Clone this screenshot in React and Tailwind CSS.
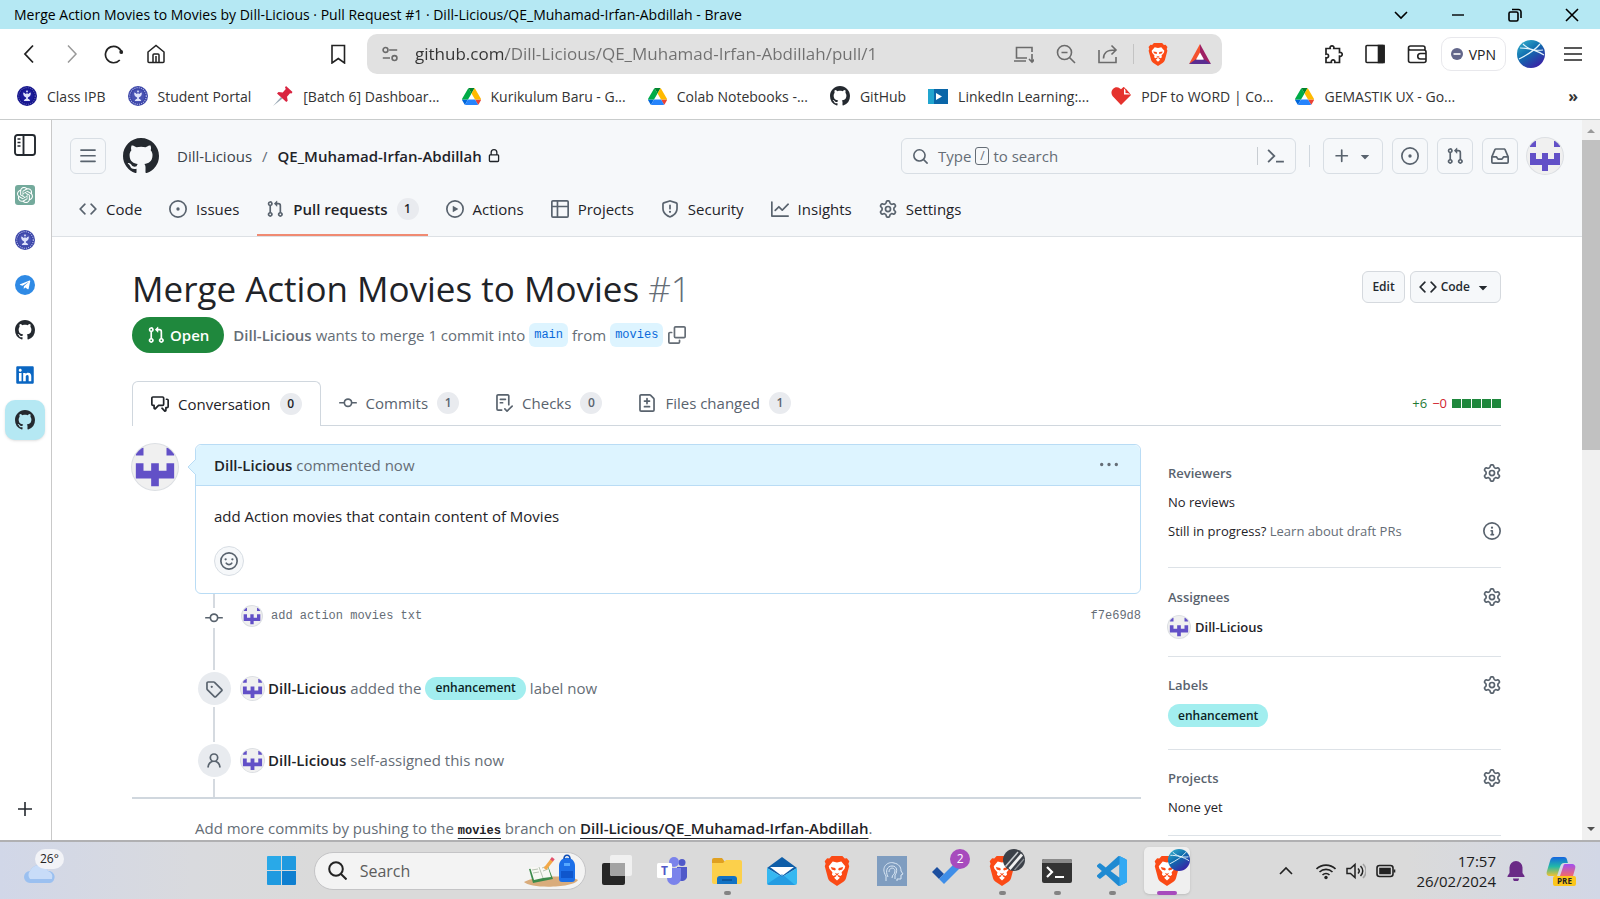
import { FaLinkedin, FaTelegramPlane } from "react-icons/fa";
import { SiOpenai } from "react-icons/si";

const SANS = "font-['Open_Sans','Noto_Sans',sans-serif]";
const MONO = "font-['Liberation_Mono',monospace]";

const paths = {
  code: "m11.28 3.22 4.25 4.25a.75.75 0 0 1 0 1.06l-4.25 4.25a.749.749 0 0 1-1.275-.326.749.749 0 0 1 .215-.734L13.94 8l-3.72-3.72a.749.749 0 0 1 .326-1.275.749.749 0 0 1 .734.215Zm-6.56 0a.751.751 0 0 1 1.042.018.751.751 0 0 1 .018 1.042L2.06 8l3.72 3.72a.749.749 0 0 1-.326 1.275.749.749 0 0 1-.734-.215L.47 8.53a.75.75 0 0 1 0-1.06Z",
  issue: "M8 9.5a1.5 1.5 0 1 0 0-3 1.5 1.5 0 0 0 0 3ZM8 0a8 8 0 1 1 0 16A8 8 0 0 1 8 0ZM1.5 8a6.5 6.5 0 1 0 13 0 6.5 6.5 0 0 0-13 0Z",
  pull: "M1.5 3.25a2.25 2.25 0 1 1 3 2.122v5.256a2.251 2.251 0 1 1-1.5 0V5.372A2.25 2.25 0 0 1 1.5 3.25Zm5.677-.177L9.573.677A.25.25 0 0 1 10 .854V2.5h1A2.5 2.5 0 0 1 13.5 5v5.628a2.251 2.251 0 1 1-1.5 0V5a1 1 0 0 0-1-1h-1v1.646a.25.25 0 0 1-.427.177L7.177 3.427a.25.25 0 0 1 0-.354ZM3.75 2.5a.75.75 0 1 0 0 1.5.75.75 0 0 0 0-1.5Zm0 9.5a.75.75 0 1 0 0 1.5.75.75 0 0 0 0-1.5Zm8.25.75a.75.75 0 1 0 1.5 0 .75.75 0 0 0-1.5 0Z",
  play: "M8 0a8 8 0 1 1 0 16A8 8 0 0 1 8 0ZM1.5 8a6.5 6.5 0 1 0 13 0 6.5 6.5 0 0 0-13 0Zm4.879-2.773 4.264 2.559a.25.25 0 0 1 0 .428l-4.264 2.559A.25.25 0 0 1 6 10.559V5.442a.25.25 0 0 1 .379-.215Z",
  table: "M0 1.75C0 .784.784 0 1.75 0h12.5C15.216 0 16 .784 16 1.75v12.5A1.75 1.75 0 0 1 14.25 16H1.75A1.75 1.75 0 0 1 0 14.25ZM6.5 6.5v8h7.75a.25.25 0 0 0 .25-.25V6.5Zm8-1.5V1.75a.25.25 0 0 0-.25-.25H6.5V5Zm-13 1.5v7.75c0 .138.112.25.25.25H5v-8ZM5 5V1.5H1.75a.25.25 0 0 0-.25.25V5Z",
  shield: "M7.467.133a1.748 1.748 0 0 1 1.066 0l5.25 1.68A1.75 1.75 0 0 1 15 3.48V7c0 1.566-.32 3.182-1.303 4.682-.983 1.498-2.585 2.813-5.032 3.855a1.697 1.697 0 0 1-1.33 0c-2.447-1.042-4.049-2.357-5.032-3.855C1.32 10.182 1 8.566 1 7V3.48a1.75 1.75 0 0 1 1.217-1.667Zm.61 1.429a.25.25 0 0 0-.153 0l-5.25 1.68a.25.25 0 0 0-.174.238V7c0 1.358.275 2.666 1.057 3.86.784 1.194 2.121 2.34 4.366 3.297a.196.196 0 0 0 .154 0c2.245-.956 3.582-2.104 4.366-3.298C13.225 9.666 13.5 8.36 13.5 7V3.48a.251.251 0 0 0-.174-.237l-5.25-1.68ZM8.75 4.75v3a.75.75 0 0 1-1.5 0v-3a.75.75 0 0 1 1.5 0ZM9 10.5a1 1 0 1 1-2 0 1 1 0 0 1 2 0Z",
  graph: "M1.5 1.75V13.5h13.75a.75.75 0 0 1 0 1.5H.75a.75.75 0 0 1-.75-.75V1.75a.75.75 0 0 1 1.5 0Zm14.28 2.53-5.25 5.25a.75.75 0 0 1-1.06 0L7 7.06 4.28 9.78a.751.751 0 0 1-1.042-.018.751.751 0 0 1-.018-1.042l3.25-3.25a.75.75 0 0 1 1.06 0L10 7.94l4.72-4.72a.751.751 0 0 1 1.042.018.751.751 0 0 1 .018 1.042Z",
  gear: "M8 0a8.2 8.2 0 0 1 .701.031C9.444.095 9.99.645 10.16 1.29l.288 1.107c.018.066.079.158.212.224.231.114.454.243.668.386.123.082.233.09.299.071l1.103-.303c.644-.176 1.392.021 1.82.63.27.385.506.792.704 1.218.315.675.111 1.422-.364 1.891l-.814.806c-.049.048-.098.147-.088.294.016.257.016.515 0 .772-.01.147.038.246.088.294l.814.806c.475.469.679 1.216.364 1.891a7.977 7.977 0 0 1-.704 1.217c-.428.61-1.176.807-1.82.63l-1.102-.302c-.067-.019-.177-.011-.3.071a5.909 5.909 0 0 1-.668.386c-.133.066-.194.158-.211.224l-.29 1.106c-.168.646-.715 1.196-1.458 1.26a8.006 8.006 0 0 1-1.402 0c-.743-.064-1.289-.614-1.458-1.26l-.289-1.106c-.018-.066-.079-.158-.212-.224a5.738 5.738 0 0 1-.668-.386c-.123-.082-.233-.09-.299-.071l-1.103.303c-.644.176-1.392-.021-1.82-.63a8.12 8.12 0 0 1-.704-1.218c-.315-.675-.111-1.422.363-1.891l.815-.806c.05-.048.098-.147.088-.294a6.214 6.214 0 0 1 0-.772c.01-.147-.038-.246-.088-.294l-.815-.806C.635 6.045.431 5.298.746 4.623a7.92 7.92 0 0 1 .704-1.217c.428-.61 1.176-.807 1.82-.63l1.102.302c.067.019.177.011.3-.071.214-.143.437-.272.668-.386.133-.066.194-.158.211-.224l.29-1.106C6.009.645 6.556.095 7.299.03 7.53.01 7.764 0 8 0Zm-.571 1.525c-.036.003-.108.036-.137.146l-.289 1.105c-.147.561-.549.967-.998 1.189-.173.086-.34.183-.5.29-.417.278-.97.423-1.529.27l-1.103-.303c-.109-.03-.175.016-.195.045-.22.312-.412.644-.573.99-.014.031-.021.11.059.19l.815.806c.411.406.562.957.53 1.456a4.709 4.709 0 0 0 0 .582c.032.499-.119 1.05-.53 1.456l-.815.806c-.081.08-.073.159-.059.19.162.346.353.677.573.989.02.03.085.076.195.046l1.102-.303c.56-.153 1.113-.008 1.53.27.161.107.328.204.501.29.447.222.85.629.997 1.189l.289 1.105c.029.109.101.143.137.146a6.6 6.6 0 0 0 1.142 0c.036-.003.108-.036.137-.146l.289-1.105c.147-.561.549-.967.998-1.189.173-.086.34-.183.5-.29.417-.278.97-.423 1.529-.27l1.103.303c.109.029.175-.016.195-.045.22-.313.411-.644.573-.99.014-.031.021-.11-.059-.19l-.815-.806c-.411-.406-.562-.957-.53-1.456a4.709 4.709 0 0 0 0-.582c-.032-.499.119-1.05.53-1.456l.815-.806c.081-.08.073-.159.059-.19a6.464 6.464 0 0 0-.573-.989c-.02-.03-.085-.076-.195-.046l-1.102.303c-.56.153-1.113.008-1.53-.27a4.44 4.44 0 0 0-.501-.29c-.447-.222-.85-.629-.997-1.189l-.289-1.105c-.029-.11-.101-.143-.137-.146a6.6 6.6 0 0 0-1.142 0ZM11 8a3 3 0 1 1-6 0 3 3 0 0 1 6 0ZM9.5 8a1.5 1.5 0 1 0-3.001.001A1.5 1.5 0 0 0 9.5 8Z",
  github: "M8 0c4.42 0 8 3.58 8 8a8.013 8.013 0 0 1-5.45 7.59c-.4.08-.55-.17-.55-.38 0-.27.01-1.13.01-2.2 0-.75-.25-1.23-.54-1.48 1.78-.2 3.65-.88 3.65-3.95 0-.88-.31-1.59-.82-2.15.08-.2.36-1.02-.08-2.12 0 0-.67-.22-2.2.82-.64-.18-1.32-.27-2-.27-.68 0-1.36.09-2 .27-1.53-1.03-2.2-.82-2.2-.82-.44 1.1-.16 1.92-.08 2.12-.51.56-.82 1.28-.82 2.15 0 3.06 1.86 3.75 3.64 3.95-.23.2-.44.55-.51 1.07-.46.21-1.61.55-2.33-.66-.15-.24-.6-.83-1.23-.82-.67.01-.27.38.01.53.34.19.73.9.82 1.13.16.45.68 1.31 2.69.94 0 .67.01 1.3.01 1.49 0 .21-.15.45-.55.38A7.995 7.995 0 0 1 0 8c0-4.42 3.58-8 8-8Z",
  bars: "M1 2.75A.75.75 0 0 1 1.75 2h12.5a.75.75 0 0 1 0 1.5H1.75A.75.75 0 0 1 1 2.75Zm0 5A.75.75 0 0 1 1.75 7h12.5a.75.75 0 0 1 0 1.5H1.75A.75.75 0 0 1 1 7.75ZM1.75 12h12.5a.75.75 0 0 1 0 1.5H1.75a.75.75 0 0 1 0-1.5Z",
  lock: "M4 4a4 4 0 0 1 8 0v2h.25c.966 0 1.75.784 1.75 1.75v5.5A1.75 1.75 0 0 1 12.25 15h-8.5A1.75 1.75 0 0 1 2 13.25v-5.5C2 6.784 2.784 6 3.75 6H4Zm8.25 3.5h-8.5a.25.25 0 0 0-.25.25v5.5c0 .138.112.25.25.25h8.5a.25.25 0 0 0 .25-.25v-5.5a.25.25 0 0 0-.25-.25ZM10.5 6V4a2.5 2.5 0 1 0-5 0v2Z",
  inbox: "M2.8 2.06A1.75 1.75 0 0 1 4.41 1h7.18c.7 0 1.333.417 1.61 1.06l2.74 6.395c.04.093.06.194.06.295v4.5A1.75 1.75 0 0 1 14.25 15H1.75A1.75 1.75 0 0 1 0 13.25v-4.5c0-.101.02-.202.06-.295Zm1.61.44a.25.25 0 0 0-.23.152L1.887 8H4.75a.75.75 0 0 1 .6.3L6.625 10h2.75l1.275-1.7a.75.75 0 0 1 .6-.3h2.863L11.82 2.652a.25.25 0 0 0-.23-.152Zm10.09 7h-2.875l-1.275 1.7a.75.75 0 0 1-.6.3h-3.5a.75.75 0 0 1-.6-.3L4.375 9.5H1.5v3.75c0 .138.112.25.25.25h12.5a.25.25 0 0 0 .25-.25Z",
  copy: "M0 6.75C0 5.784.784 5 1.75 5h1.5a.75.75 0 0 1 0 1.5h-1.5a.25.25 0 0 0-.25.25v7.5c0 .138.112.25.25.25h7.5a.25.25 0 0 0 .25-.25v-1.5a.75.75 0 0 1 1.5 0v1.5A1.75 1.75 0 0 1 9.25 16h-7.5A1.75 1.75 0 0 1 0 14.25ZM5 1.75C5 .784 5.784 0 6.75 0h7.5C15.216 0 16 .784 16 1.75v7.5A1.75 1.75 0 0 1 14.25 11h-7.5A1.75 1.75 0 0 1 5 9.25Zm1.75-.25a.25.25 0 0 0-.25.25v7.5c0 .138.112.25.25.25h7.5a.25.25 0 0 0 .25-.25v-7.5a.25.25 0 0 0-.25-.25Z",
  discussion: "M1.75 1h8.5c.966 0 1.75.784 1.75 1.75v5.5A1.75 1.75 0 0 1 10.25 10H7.061l-2.574 2.573A1.458 1.458 0 0 1 2 11.543V10h-.25A1.75 1.75 0 0 1 0 8.25v-5.5C0 1.784.784 1 1.75 1ZM1.5 2.75v5.5c0 .138.112.25.25.25h1a.75.75 0 0 1 .75.75v2.19l2.72-2.72a.749.749 0 0 1 .53-.22h3.5a.25.25 0 0 0 .25-.25v-5.5a.25.25 0 0 0-.25-.25h-8.5a.25.25 0 0 0-.25.25Zm13 2a.25.25 0 0 0-.25-.25h-.5a.75.75 0 0 1 0-1.5h.5c.966 0 1.75.784 1.75 1.75v5.5A1.75 1.75 0 0 1 14.25 12H14v1.543a1.458 1.458 0 0 1-2.487 1.03L9.22 12.28a.749.749 0 0 1 .326-1.275.749.749 0 0 1 .734.215l2.22 2.22v-2.19a.75.75 0 0 1 .75-.75h1a.25.25 0 0 0 .25-.25Z",
  commit: "M11.93 8.5a4.002 4.002 0 0 1-7.86 0H.75a.75.75 0 0 1 0-1.5h3.32a4.002 4.002 0 0 1 7.86 0h3.32a.75.75 0 0 1 0 1.5Zm-1.43-.75a2.5 2.5 0 1 0-5 0 2.5 2.5 0 0 0 5 0Z",
  checklist: "M2.5 1.75v11.5c0 .138.112.25.25.25h3.17a.75.75 0 0 1 0 1.5H2.75A1.75 1.75 0 0 1 1 13.25V1.75C1 .784 1.784 0 2.75 0h8.5C12.216 0 13 .784 13 1.75v7.736a.75.75 0 0 1-1.5 0V1.75a.25.25 0 0 0-.25-.25h-8.5a.25.25 0 0 0-.25.25Zm13.274 9.537v-.001l-4.557 4.45a.75.75 0 0 1-1.055-.008l-1.943-1.95a.75.75 0 0 1 1.062-1.058l1.419 1.425 4.026-3.932a.75.75 0 1 1 1.048 1.074ZM4.75 4h4.5a.75.75 0 0 1 0 1.5h-4.5a.75.75 0 0 1 0-1.5ZM4 7.75A.75.75 0 0 1 4.75 7h2a.75.75 0 0 1 0 1.5h-2A.75.75 0 0 1 4 7.75Z",
  filediff: "M1 1.75C1 .784 1.784 0 2.75 0h7.586c.464 0 .909.184 1.237.513l2.914 2.914c.329.328.513.773.513 1.237v9.586A1.75 1.75 0 0 1 13.25 16H2.75A1.75 1.75 0 0 1 1 14.25Zm1.75-.25a.25.25 0 0 0-.25.25v12.5c0 .138.112.25.25.25h10.5a.25.25 0 0 0 .25-.25V4.664a.25.25 0 0 0-.073-.177l-2.914-2.914a.25.25 0 0 0-.177-.073ZM8 3.25a.75.75 0 0 1 .75.75v1.5h1.5a.75.75 0 0 1 0 1.5h-1.5v1.5a.75.75 0 0 1-1.5 0V7h-1.5a.75.75 0 0 1 0-1.5h1.5V4A.75.75 0 0 1 8 3.25Zm-3 8a.75.75 0 0 1 .75-.75h4.5a.75.75 0 0 1 0 1.5h-4.5a.75.75 0 0 1-.75-.75Z",
  kebab: "M8 9a1.5 1.5 0 1 0 0-3 1.5 1.5 0 0 0 0 3ZM1.5 9a1.5 1.5 0 1 0 0-3 1.5 1.5 0 0 0 0 3Zm13 0a1.5 1.5 0 1 0 0-3 1.5 1.5 0 0 0 0 3Z",
  tag: "M1 7.775V2.75C1 1.784 1.784 1 2.75 1h5.025c.464 0 .91.184 1.238.513l6.25 6.25a1.75 1.75 0 0 1 0 2.474l-5.026 5.026a1.75 1.75 0 0 1-2.474 0l-6.25-6.25A1.752 1.752 0 0 1 1 7.775Zm1.5 0c0 .066.026.13.073.177l6.25 6.25a.25.25 0 0 0 .354 0l5.025-5.025a.25.25 0 0 0 0-.354l-6.25-6.25a.25.25 0 0 0-.177-.073H2.75a.25.25 0 0 0-.25.25ZM6 5a1 1 0 1 1 0 2 1 1 0 0 1 0-2Z",
  person: "M10.561 8.073a6.005 6.005 0 0 1 3.432 5.142.75.75 0 1 1-1.498.07 4.5 4.5 0 0 0-8.99 0 .75.75 0 0 1-1.498-.07 6.004 6.004 0 0 1 3.431-5.142 3.999 3.999 0 1 1 5.123 0ZM10.5 5a2.5 2.5 0 1 0-5 0 2.5 2.5 0 0 0 5 0Z",
  info: "M0 8a8 8 0 1 1 16 0A8 8 0 0 1 0 8Zm8-6.5a6.5 6.5 0 1 0 0 13 6.5 6.5 0 0 0 0-13ZM6.5 7.75A.75.75 0 0 1 7.25 7h1a.75.75 0 0 1 .75.75v2.75h.25a.75.75 0 0 1 0 1.5h-2a.75.75 0 0 1 0-1.5h.25v-2h-.25a.75.75 0 0 1-.75-.75ZM8 6a1 1 0 1 1 0-2 1 1 0 0 1 0 2Z",
  search: "M10.68 11.74a6 6 0 0 1-7.922-8.982 6 6 0 0 1 8.982 7.922l3.04 3.04a.749.749 0 0 1-.326 1.275.749.749 0 0 1-.734-.215ZM11.5 7a4.499 4.499 0 1 0-8.997 0A4.499 4.499 0 0 0 11.5 7Z",
  plus: "M7.75 2a.75.75 0 0 1 .75.75V7h4.25a.75.75 0 0 1 0 1.5H8.5v4.25a.75.75 0 0 1-1.5 0V8.5H2.75a.75.75 0 0 1 0-1.5H7V2.75A.75.75 0 0 1 7.75 2Z",
  caret: "m4.427 7.427 3.396 3.396a.25.25 0 0 0 .354 0l3.396-3.396A.25.25 0 0 0 11.396 7H4.604a.25.25 0 0 0-.177.427Z",
};

function Oct({ name, className = "size-[18px]" }) {
  return (
    <svg viewBox="0 0 16 16" fill="currentColor" aria-hidden="true" className={`shrink-0 ${className}`}>
      <path d={paths[name]} />
    </svg>
  );
}

function Line({ children, className = "size-5", box = "0 0 20 20", w = 1.6 }) {
  return (
    <svg viewBox={box} fill="none" stroke="currentColor" strokeWidth={w} aria-hidden="true" className={`shrink-0 ${className}`}>
      {children}
    </svg>
  );
}

function Avatar({ className }) {
  return (
    <svg viewBox="0 0 6 6" aria-hidden="true" className={`shrink-0 rounded-full bg-[#f0f0f0] ring-1 ring-[#dcdfe3] ${className}`}>
      <path fill="#6250c7" d="M.5 .5h1v1h-1zM4.5 .5h1v1h-1zM.5 2.5h1v1h1v-1h1v1h1v-1h1v2h-2v1h-1v-1h-2z" />
    </svg>
  );
}

function Brave({ className }) {
  return (
    <svg viewBox="0 0 24 28" aria-hidden="true" className={`shrink-0 ${className}`}>
      <path fill="#fb4a16" d="M12 0h5l2.200 2.300 2-.3 2.300 3-.9 2.200.8 2.300-3 11.300c-.4 1.400-1.300 2.500-2.400 3.300L12 28l-6-3.900c-1.100-.8-2-1.900-2.400-3.300L.6 9.500l.8-2.300L.5 5l2.300-3 2 .3L7 0z" />
      <path fill="#fff" d="M8 5.200 12 6l4-.8 3.700 4.300-.6 2.400-2.800 3.300.4 2.200-1.500 1.200-2-.8-.5 1.200 2 1.400L12 22.800l-2.700-2.400 2-1.400-.5-1.200-2 .8-1.500-1.200.4-2.200-2.800-3.300-.6-2.400z" />
      <path fill="#fb4a16" d="m6.300 10.300 4 .8.600 1.400-.8 1-3-1zM17.700 10.300l-4 .8-.6 1.400.8 1 3-1zM10 15.600l2 .9 2-.9-2 3z" />
    </svg>
  );
}

function Drive() {
  return (
    <svg viewBox="0 0 87 78" aria-hidden="true" className="h-[17px] w-[19px] shrink-0">
      <path fill="#0066da" d="m6.600 66.850 3.850 6.650c.8 1.400 1.950 2.500 3.300 3.300L27.500 53H0c0 1.550.4 3.100 1.200 4.500z" />
      <path fill="#00ac47" d="M43.650 25 29.900 1.200c-1.350.8-2.500 1.900-3.300 3.300L1.200 48.500C.4 49.900 0 51.450 0 53h27.500z" />
      <path fill="#ea4335" d="M73.550 76.800c1.350-.8 2.500-1.900 3.300-3.300l1.600-2.750L86.100 57.500c.8-1.400 1.200-2.950 1.200-4.500H59.800l5.850 11.500z" />
      <path fill="#00832d" d="M43.650 25 57.400 1.200C56.050.4 54.500 0 52.900 0H34.400c-1.600 0-3.150.45-4.500 1.200z" />
      <path fill="#2684fc" d="M59.800 53H27.500L13.750 76.800c1.350.8 2.900 1.200 4.500 1.200h50.800c1.600 0 3.150-.45 4.500-1.200z" />
      <path fill="#ffba00" d="m73.400 26.500-12.700-22c-.8-1.400-1.950-2.500-3.300-3.300L43.650 25 59.800 53h27.450c0-1.550-.4-3.100-1.200-4.500z" />
    </svg>
  );
}

function Ipb({ light, className = "size-5" }) {
  return (
    <svg viewBox="0 0 20 20" aria-hidden="true" className={`shrink-0 ${className}`}>
      <circle cx="10" cy="10" r="10" fill={light ? "#3a44a8" : "#14148c"} />
      <circle cx="10" cy="10" r="8.300" fill="none" stroke="#c3c9f0" strokeWidth="1.200" strokeDasharray="1 1.200" opacity={light ? 0.9 : 0.4} />
      <circle cx="10" cy="10" r="6.600" fill={light ? "#4953b3" : "#1c1c9a"} />
      <path d="M10 4 9 5.600l1 1.200 1-1.200zM6.200 6.500c-.3 2.600 1 4.400 2.900 4.900v1.300c-1.200.3-2 1-2.300 2.300h6.400c-.3-1.300-1.100-2-2.300-2.300v-1.300c1.900-.5 3.200-2.300 2.900-4.900-1.100.1-1.900.6-2.300 1.500L10 7.200 8.500 8c-.4-.9-1.200-1.400-2.300-1.500z" fill="#dfe3fb" />
    </svg>
  );
}

function Globe({ className }) {
  return (
    <svg viewBox="0 0 28 28" aria-hidden="true" className={`shrink-0 ${className}`}>
      <defs>
        <linearGradient id="globe" x1="0" y1="0" x2="0.700" y2="1">
          <stop offset="0" stopColor="#3cb9cf" />
          <stop offset="0.500" stopColor="#0f6cae" />
          <stop offset="1" stopColor="#3a22a6" />
        </linearGradient>
      </defs>
      <circle cx="14" cy="14" r="14" fill="url(#globe)" />
      <path d="M3 8c8 0 16 2 24 7M2 19C10 15 18 10 23 4M6 4c5 5 12 7 20 6" fill="none" stroke="#e3f4fb" strokeWidth="1.200" />
    </svg>
  );
}

function TitleBar() {
  const cell = "flex h-full w-[57px] items-center justify-center";
  return (
    <header className="flex h-[29px] shrink-0 items-center justify-between bg-[#b5e8f3] pl-[14px] text-black">
      <span className="truncate text-[14px]">Merge Action Movies to Movies by Dill-Licious · Pull Request #1 · Dill-Licious/QE_Muhamad-Irfan-Abdillah - Brave</span>
      <div className="flex h-full">
        <button aria-label="Search tabs" className={cell}><Line className="size-[14px]" box="0 0 14 14"><path d="m1 4 6 6 6-6" /></Line></button>
        <button aria-label="Minimize" className={cell}><Line className="size-[14px]" box="0 0 14 14" w={1.4}><path d="M1 7h12" /></Line></button>
        <button aria-label="Restore" className={cell}><Line className="size-[14px]" box="0 0 14 14"><rect x="1" y="4" width="9" height="9" rx="1.500" /><path d="M4 1.500h6.500a2.500 2.500 0 0 1 2.500 2.500V10" /></Line></button>
        <button aria-label="Close" className={cell}><Line className="size-[14px]" box="0 0 14 14"><path d="m1 1 12 12M13 1 1 13" /></Line></button>
      </div>
    </header>
  );
}

function Toolbar() {
  return (
    <div className="flex h-[50px] shrink-0 items-center pl-[19px] pr-[18px] text-[#222]">
      <div className="flex w-[348px] items-center">
        <button aria-label="Back" className="mr-[23px]"><Line w={1.8}><path d="M14 1.500 6 10l8 8.500" /></Line></button>
        <button aria-label="Forward" className="mr-[22px] text-[#999]"><Line w={1.5}><path d="m6 1.500 8 8.500-8 8.500" /></Line></button>
        <button aria-label="Reload" className="mr-[22px]"><Line w={1.7}><path d="M15.800 16a8.200 8.200 0 1 1 2-6.500" /><circle cx="17.200" cy="8" r="1.900" fill="currentColor" stroke="none" /></Line></button>
        <button aria-label="Home"><Line w={1.5}><path d="M2 8v9.500a1 1 0 0 0 1 1h14a1 1 0 0 0 1-1V8l-8-6.500zM7 18.500V11a1 1 0 0 1 1-1h4a1 1 0 0 1 1 1v7.500M10 12v6" /></Line></button>
        <button aria-label="Bookmark this page" className="ml-auto mr-[19px]"><Line w={1.6}><path d="M4 1.500h12.500v17.500l-6.200-4.500L4 19z" /></Line></button>
      </div>
      <div className="flex h-10 flex-1 items-center rounded-[10px] bg-[#e1e1e1] pl-[14px] pr-[11px] text-[#6b6b6b]">
        <Line className="mr-[16px] size-[18px]" w={1.8}><circle cx="5" cy="5.500" r="2.700" /><path d="M9 5.500h9M2 14.500h8" /><circle cx="15" cy="14.500" r="2.700" /></Line>
        <input aria-label="Address" readOnly defaultValue="github.com/Dill-Licious/QE_Muhamad-Irfan-Abdillah/pull/1" className="min-w-0 flex-1 bg-[linear-gradient(90deg,#333_91px,#707070_91px)] bg-clip-text text-[17px] text-transparent outline-none" />
        <button aria-label="Install" className="mr-[22px]"><Line><path d="M18 8V3.500H2.500V14H13M0 17h12M18 10v7.500M15 15l3 3 3-3" /></Line></button>
        <button aria-label="Zoom" className="mr-[22px]"><Line><circle cx="8.500" cy="8.500" r="7" /><path d="M5.500 8.500h6M13.500 13.500l5.500 5.500" /></Line></button>
        <button aria-label="Share" className="mr-[15px]"><Line><path d="M1 6v12.500h17V13M5.500 14.500c0-6 3-8.500 11.500-8.500M13.500 1.500 18 6l-4.500 4.500" /></Line></button>
        <span className="mr-[14px] h-5 w-px bg-[#c3c3c3]" />
        <button aria-label="Brave shields" className="mr-[21px]"><Brave className="h-[23px] w-5" /></button>
        <button aria-label="Rewards">
          <svg viewBox="0 0 22 20" aria-hidden="true" className="h-5 w-[22px]"><path fill="#f4512e" d="M11 0 0 20l7.500-3.500L11 10z" /><path fill="#9e1f63" d="m11 0 11 20-7.500-3.500L11 10z" /><path fill="#5b2d91" d="M0 20h22l-6.500-4.500h-9z" /><path fill="#fff" d="m11 8.500 4 7H7z" /></svg>
        </button>
      </div>
      <div className="ml-[101px] flex items-center">
        <button aria-label="Extensions" className="mr-[22px]"><Line w={1.7}><path d="M3 4.500h4.200c-1-3.600 4.600-3.600 3.600 0h5.700v4c3.600-.8 3.600 4.500 0 3.700v6.300h-4.700c.8-3.500-4.200-3.500-3.400 0H3v-4.700c3.400.8 3.400-4.500 0-3.700z" /></Line></button>
        <button aria-label="Side panel" className="mr-[22px]"><Line w={1.6}><rect x="1" y="1.500" width="18" height="17" rx="1" /><path fill="currentColor" d="M13.500 1.500H19v17h-5.500z" /></Line></button>
        <button aria-label="Wallet" className="mr-[14px]"><Line w={1.6}><path d="M18 6.500V4a2 2 0 0 0-2-2H3.500a2 2 0 0 0 0 4H17a2 2 0 0 1 2 2v8.500a2 2 0 0 1-2 2H3.500a2 2 0 0 1-2-2V4M19 9.500h-5.500a2.700 2.700 0 0 0 0 5.500H19" /></Line></button>
        <button className="mr-[11px] flex h-[34px] items-center gap-[6px] rounded-[10px] border border-[#e8e8ec] px-[9px] text-[14px]">
          <svg viewBox="0 0 12 12" aria-hidden="true" className="size-3"><circle cx="6" cy="6" r="6" fill="#62668a" /><path d="M2.500 6h7" stroke="#fff" strokeWidth="1.600" /></svg>
          VPN
        </button>
        <button aria-label="Profile" className="mr-[19px]"><Globe className="size-7" /></button>
        <button aria-label="Menu"><Line className="size-[18px]" box="0 0 18 18" w={1.5}><path d="M0 3h18M0 9h18M0 15h18" /></Line></button>
      </div>
    </div>
  );
}

const bookmarks = [
  ["Class IPB", <Ipb key="i" />],
  ["Student Portal", <Ipb key="i" light />],
  ["[Batch 6] Dashboar...", <svg key="i" viewBox="0 0 20 20" aria-hidden="true" className="size-5"><path d="m0 20 8-9 1.500 1.500z" fill="#9aa9b5" /><path fill="#d9233f" d="m13 0 6.500 6-1 1.500-1.500-.3-3 3.500.7 4-1.400 1.300L4 7.500 5.500 6l4.200.5L12.800 3 12 1.500z" /></svg>],
  ["Kurikulum Baru - G...", <Drive key="i" />],
  ["Colab Notebooks -...", <Drive key="i" />],
  ["GitHub", <Oct key="i" name="github" className="size-5 text-[#24292f]" />],
  ["LinkedIn Learning:...", <svg key="i" viewBox="0 0 20 15" aria-hidden="true" className="h-[15px] w-5"><path fill="#21a5cf" d="M0 0h10v15H0z" /><path fill="#0a66a8" d="M6 0h14v15H6z" /><path fill="#fff" d="m8 4 6 3.500L8 11z" /></svg>],
  ["PDF to WORD | Co...", <svg key="i" viewBox="0 0 20 18" aria-hidden="true" className="h-[18px] w-5"><path fill="#e5322d" d="M10 18 1.500 9C-2 4 4-2.500 9 1.500l1 .8L12.500 0H13l7 8z" /><path fill="#fff" d="M13 1.500v6h6z" /><path fill="#e5322d" d="M14.500 1.500V6l4.500.5z" /></svg>],
  ["GEMASTIK UX - Go...", <Drive key="i" />],
];

function Bookmarks() {
  return (
    <nav aria-label="Bookmarks" className="flex h-[41px] shrink-0 items-center gap-[22px] border-b border-[#c9cccc] pb-[6px] pl-[17px] pr-[22px] text-[14px] text-[#333]">
      {bookmarks.map(([label, icon]) => (
        <a key={label} href="#" className="flex shrink-0 items-center gap-[10px] whitespace-nowrap">{icon}{label}</a>
      ))}
      <button aria-label="More bookmarks" className="ml-auto text-[16px] font-bold leading-5">»</button>
    </nav>
  );
}

function Rail() {
  const cell = "flex size-10 items-center justify-center";
  return (
    <aside className="flex w-[52px] shrink-0 flex-col items-center gap-[5px] border-r border-[#c9c9c9] pb-[11px] pr-px pt-[5px] text-[#24292f]">
      <button aria-label="Toggle sidebar" className={`mb-[5px] ${cell}`}><Line className="size-[22px]" box="0 0 22 22" w={1.9}><rect x="1" y="1" width="20" height="20" rx="2.500" /><path d="M9.500 1v20" /><path strokeWidth="1.700" d="M3.500 5h3M3.500 8.500h3M3.500 12h3" /></Line></button>
      <a href="#" aria-label="ChatGPT" className={cell}><span className="flex size-5 items-center justify-center rounded-[3px] bg-[#74aa9c] text-white"><SiOpenai className="size-4" /></span></a>
      <a href="#" aria-label="IPB" className={cell}><Ipb light /></a>
      <a href="#" aria-label="Telegram" className={cell}><span className="flex size-5 items-center justify-center rounded-full bg-[#2f8ae5] text-white"><FaTelegramPlane className="mr-px size-3" /></span></a>
      <a href="#" aria-label="GitHub" className={cell}><Oct name="github" className="size-5" /></a>
      <a href="#" aria-label="LinkedIn" className={cell}><FaLinkedin className="size-5 text-[#0a66c2]" /></a>
      <a href="#" aria-label="GitHub pull request" className={`rounded-[10px] bg-[#b5e8f3] shadow-sm ${cell}`}><Oct name="github" className="size-5" /></a>
      <button aria-label="Add" className={`mt-auto ${cell}`}><Line className="size-[14px]" box="0 0 14 14"><path d="M7 0v14M0 7h14" /></Line></button>
    </aside>
  );
}

const repoTabs = [
  ["Code", "code"], ["Issues", "issue"], ["Pull requests", "pull", 1], ["Actions", "play"],
  ["Projects", "table"], ["Security", "shield"], ["Insights", "graph"], ["Settings", "gear"],
];

function Counter({ children }) {
  return <span className="flex h-[22px] min-w-[22px] items-center justify-center rounded-full bg-[#e9ebef] text-[12px] font-semibold">{children}</span>;
}

function RepoHeader() {
  const box = "flex h-9 items-center justify-center rounded-md border border-[#d8dee4] text-[#59636e]";
  return (
    <header className="border-b border-[#dde1e5] bg-[#f6f8fa] pl-[18px] pr-[19px] pt-[18px]">
      <div className="flex h-9 items-center">
        <button aria-label="Open navigation" className={`w-9 ${box}`}><Oct name="bars" /></button>
        <a href="#" aria-label="GitHub home" className="ml-[17px] mr-[18px]"><Oct name="github" className="size-9 text-[#24292f]" /></a>
        <nav aria-label="Breadcrumb" className="flex items-center text-[15px] text-[#1f2328]">
          <a href="#" className="text-[#3b4249]">Dill-Licious</a>
          <span className="mx-[10px] text-[#656d76]">/</span>
          <a href="#" className="mr-[5px] font-semibold">QE_Muhamad-Irfan-Abdillah</a>
          <Oct name="lock" className="size-[14px]" />
        </nav>
        <button className={`ml-auto w-[395px] px-[10px] text-[15px] ${box}`}>
          <Oct name="search" className="mr-[9px] size-[17px]" />
          <span className="flex items-center gap-[4px] text-[#656d76]">Type <kbd className={`flex h-[18px] w-[14px] items-center justify-center rounded-[3px] border border-[#656d76] text-[12px] ${SANS}`}>/</kbd> to search</span>
          <span className="ml-auto mr-[9px] h-[18px] w-px bg-[#c8cdd2]" />
          <Line className="size-[18px]" box="0 0 16 16"><path d="m1 2.500 5.500 5.500L1 13.500M8 13h7" /></Line>
        </button>
        <span className="mx-[13px] h-[22px] w-px bg-[#d0d7de]" />
        <button aria-label="Create new" className={`w-[60px] gap-[5px] ${box}`}><Oct name="plus" /><Oct name="caret" /></button>
        <button aria-label="Issues" className={`ml-[9px] w-9 ${box}`}><Oct name="issue" /></button>
        <button aria-label="Pull requests" className={`ml-[9px] w-9 ${box}`}><Oct name="pull" /></button>
        <button aria-label="Notifications" className={`ml-[9px] mr-[9px] w-9 ${box}`}><Oct name="inbox" /></button>
        <button aria-label="Account"><Avatar className="size-9" /></button>
      </div>
      <nav aria-label="Repository" className="mt-[10px] flex gap-[9px] text-[15px] text-[#1f2328]">
        {repoTabs.map(([label, icon, count]) => (
          <a key={label} href="#" className={`flex h-[52px] items-center gap-[9px] border-b-2 px-[9px] ${count ? "border-[#f08a72] font-semibold" : "border-transparent"}`}>
            <span className="text-[#59636e]"><Oct name={icon} /></span>{label}{count && <Counter>{count}</Counter>}
          </a>
        ))}
      </nav>
    </header>
  );
}

function Branch({ children }) {
  return <a href="#" className={`flex h-6 items-center rounded-md bg-[#ddf4ff] px-[5px] text-[12px] text-[#0969da] ${MONO}`}>{children}</a>;
}

function LabelPill() {
  return <a href="#" className="flex h-[23px] items-center rounded-full bg-[#a2eeef] px-[10px] text-[12px] font-semibold text-[#0a2224]">enhancement</a>;
}

const prTabs = [["Commits", "commit", 1], ["Checks", "checklist", 0], ["Files changed", "filediff", 1]];

function PullHeader() {
  const btn = "flex h-8 items-center rounded-md border border-[#d5d9de] bg-[#f6f8fa] text-[12px] font-semibold text-[#24292f]";
  return (
    <>
      <div className="flex items-start justify-between">
        <h1 className="text-[35px] leading-[45px] text-[#1f2328]">Merge Action Movies to Movies <span className="font-light text-[#656d76]">#1</span></h1>
        <div className="mt-[5px] flex gap-[5px]">
          <button className={`px-[9px] ${btn}`}>Edit</button>
          <button className={`gap-[4px] px-[8px] ${btn}`}><Oct name="code" />Code<Oct name="caret" /></button>
        </div>
      </div>
      <div className="mt-[6px] flex items-center text-[15px] text-[#656d76]">
        <span className="mr-[9px] flex h-9 items-center gap-[5px] rounded-full bg-[#1f883d] px-[15px] font-semibold text-white"><Oct name="pull" />Open</span>
        <a href="#" className="mr-[4px] font-semibold">Dill-Licious</a>
        <span className="mr-[4px]">wants to merge 1 commit into</span>
        <Branch>main</Branch>
        <span className="mx-[4px]">from</span>
        <Branch>movies</Branch>
        <button aria-label="Copy branch name" className="ml-[5px]"><Oct name="copy" /></button>
      </div>
      <div className="mt-[28px] flex items-end justify-between border-b border-[#d0d7de] text-[15px]">
        <nav aria-label="Pull request" className="flex text-[#59636e]">
          <a href="#" className="-mb-px flex h-[45px] items-center gap-[9px] rounded-t-md border border-b-0 border-[#d0d7de] bg-white px-[18px] text-[#1f2328]"><Oct name="discussion" />Conversation<Counter>0</Counter></a>
          {prTabs.map(([label, icon, n]) => (
            <a key={label} href="#" className="flex h-11 items-center gap-[9px] px-[18px]"><Oct name={icon} />{label}<Counter>{n}</Counter></a>
          ))}
        </nav>
        <div className="flex items-center gap-[5px] pb-[12px] text-[13px] leading-5">
          <span className="text-[#1f7a34]">+6</span>
          <span className="text-[#d1242f]">−0</span>
          <span className="flex gap-px">
            {[0, 1, 2, 3, 4].map((i) => <span key={i} className="size-[9px] bg-[#1f883d]" />)}
          </span>
        </div>
      </div>
    </>
  );
}

function Rule({ className }) {
  return <span className={`w-[2px] bg-[#d5dae0] ${className}`} />;
}

function Badge({ name }) {
  return <span className="my-[2px] flex size-[33px] shrink-0 items-center justify-center rounded-full bg-[#e8ebef] text-[#59636e]"><Oct name={name} /></span>;
}

function Timeline() {
  const col = "flex w-[38px] shrink-0 flex-col items-center";
  return (
    <div className="min-w-0 flex-1">
      <div className="flex">
        <Avatar className="mr-[17px] size-[46px]" />
        <article className="relative min-w-0 flex-1 rounded-md border border-[#b9dcf5]">
          <svg viewBox="0 0 9 16" aria-hidden="true" className="absolute -left-[9px] top-[14px] h-4 w-[9px]"><path d="M9 0 1 8l8 8" fill="#ddf4ff" stroke="#b9dcf5" /></svg>
          <header className="flex h-[41px] items-center justify-between rounded-t-md border-b border-[#b9dcf5] bg-[#ddf4ff] pl-[18px] pr-[22px] text-[15px] text-[#656d76]">
            <p><a href="#" className="font-semibold text-[#1f2328]">Dill-Licious</a> commented now</p>
            <button aria-label="Comment actions"><Oct name="kebab" /></button>
          </header>
          <div className="px-[18px] pb-[17px] pt-[18px]">
            <p className="text-[15px] leading-6 text-[#1f2328]">add Action movies that contain content of Movies</p>
            <button aria-label="Add reaction" className="mt-[18px] flex size-[30px] items-center justify-center rounded-full border border-[#d8dee4] bg-[#f6f8fa] text-[#59636e]">
              <Line className="size-[18px]" box="0 0 16 16" w={1.5}><circle cx="8" cy="8" r="7.250" /><path d="M5.600 10c1.200 1.600 3.600 1.600 4.800 0" strokeLinecap="round" /><circle cx="5" cy="6.500" r="1" fill="currentColor" stroke="none" /><circle cx="11" cy="6.500" r="1" fill="currentColor" stroke="none" /></Line>
            </button>
          </div>
        </article>
      </div>
      <ol className="ml-[63px] text-[15px] text-[#656d76]">
        <li className="flex h-[76px]">
          <div className={col}><Rule className="h-[14px]" /><Oct name="commit" className="my-[1px] size-[18px] text-[#59636e]" /><Rule className="flex-1" /></div>
          <div className={`mt-[10px] flex h-6 flex-1 items-center pl-[9px] text-[12px] ${MONO}`}>
            <Avatar className="mr-[9px] size-5" />
            <a href="#">add action movies txt</a>
            <a href="#" className="ml-auto">f7e69d8</a>
          </div>
        </li>
        <li className="flex h-[72px]">
          <div className={col}><Badge name="tag" /><Rule className="flex-1" /></div>
          <div className="mt-[6px] flex h-6 items-center pl-[8px]">
            <Avatar className="mr-[4px] size-[23px]" />
            <a href="#" className="font-semibold text-[#1f2328]">Dill-Licious</a>
            <span className="mx-[4px]">added the</span><LabelPill /><span className="ml-[4px]">label now</span>
          </div>
        </li>
        <li className="flex h-[55px]">
          <div className={col}><Badge name="person" /><Rule className="flex-1" /></div>
          <div className="mt-[6px] flex h-6 items-center pl-[8px]">
            <Avatar className="mr-[4px] size-[23px]" />
            <a href="#" className="font-semibold text-[#1f2328]">Dill-Licious</a>
            <span className="ml-[4px]">self-assigned this now</span>
          </div>
        </li>
      </ol>
      <p className="border-t-2 border-[#d0d7de] pl-[63px] pt-[17px] text-[15px] leading-6 text-[#656d76]">
        Add more commits by pushing to the <b className={`text-[12px] text-[#1f2328] underline decoration-1 underline-offset-4 ${MONO}`}>movies</b> branch on <a href="#" className="font-semibold text-[#1f2328] underline decoration-1 underline-offset-4">Dill-Licious/QE_Muhamad-Irfan-Abdillah</a>.
      </p>
    </div>
  );
}

function SideSection({ title, children, className }) {
  return (
    <section className={`border-b border-[#dde2e7] ${className}`}>
      <div className="flex h-5 items-center justify-between font-semibold text-[#59636e]">
        <h2>{title}</h2>
        <button aria-label={`Edit ${title}`}><Oct name="gear" /></button>
      </div>
      {children}
    </section>
  );
}

function Sidebar() {
  return (
    <aside className="ml-[27px] w-[333px] shrink-0 pt-[19px] text-[13px] leading-5 text-[#1f2328]">
      <SideSection title="Reviewers" className="pb-[26px]">
        <p className="mt-[9px]">No reviews</p>
        <div className="mt-[9px] flex items-center justify-between">
          <p>Still in progress? <a href="#" className="text-[#656d76]">Learn about draft PRs</a></p>
          <Oct name="info" className="size-[18px] text-[#59636e]" />
        </div>
      </SideSection>
      <SideSection title="Assignees" className="pb-[17px] pt-[19px]">
        <a href="#" className="mt-[8px] flex h-6 items-center gap-[5px] font-semibold"><Avatar className="size-[22px]" />Dill-Licious</a>
      </SideSection>
      <SideSection title="Labels" className="pb-[22px] pt-[18px]">
        <div className="mt-[9px] flex"><LabelPill /></div>
      </SideSection>
      <SideSection title="Projects" className="pb-[18px] pt-[18px]">
        <p className="mt-[9px]">None yet</p>
      </SideSection>
    </aside>
  );
}

function Scrollbar() {
  return (
    <div aria-hidden="true" className="flex w-[18px] shrink-0 flex-col items-center bg-[#f0f0f0]">
      <svg viewBox="0 0 18 20" className="h-5 w-[18px]"><path d="m5 13 4-4 4 4z" fill="#9a9a9a" /></svg>
      <span className="h-[43%] w-full bg-[#c1c1c1]" />
      <svg viewBox="0 0 18 20" className="mt-auto h-5 w-[18px]"><path d="m5 7 4 4 4-4z" fill="#505050" /></svg>
    </div>
  );
}

const MonoBall = () => (
  <svg viewBox="0 0 22 22" aria-hidden="true" className="size-[22px]">
    <circle cx="11" cy="11" r="11" fill="#3b4048" />
    <path d="M2.500 17.500 15 3" stroke="#c9ccd0" strokeWidth="1.500" />
    <path d="M6.500 20 19 5.500" stroke="#f1f1f1" strokeWidth="2.800" />
    <path d="M11.500 21 21 10" stroke="#8c9096" strokeWidth="1.200" />
  </svg>
);

const apps = [
  { name: "Task view", icon: <svg viewBox="0 0 30 32" className="h-8 w-[30px]"><path fill="#262626" d="M0 10a2 2 0 0 1 2-2h21v20a2 2 0 0 1-2 2H2a2 2 0 0 1-2-2z" /><rect x="8" y="0" width="22" height="21" rx="2" fill="#f1f1f1" opacity=".95" /><path fill="#a3a3a3" d="M8 8h15v13H10a2 2 0 0 1-2-2z" /></svg> },
  { name: "Teams", icon: <svg viewBox="0 0 30 28" className="h-7 w-[30px]"><circle cx="25" cy="5.500" r="3.500" fill="#5059c9" /><path fill="#5059c9" d="M20 10h10v8a5 5 0 0 1-10 2z" /><circle cx="17" cy="5" r="5" fill="#7b83eb" /><path fill="#7b83eb" d="M10 11h14v10a7 7 0 0 1-14 0z" /><rect y="6" width="15" height="15" rx="1.500" fill="#fff" /><text x="7.500" y="18" textAnchor="middle" fontSize="12" fontWeight="700" fill="#5059c9">T</text></svg> },
  { name: "File Explorer", dot: true, icon: <svg viewBox="0 0 30 28" className="h-7 w-[30px]"><path fill="#e0a020" d="M0 3a2 2 0 0 1 2-2h8l3 4v4H0z" /><path fill="#fcd04b" d="M0 6h11l3-3h14a2 2 0 0 1 2 2v20a2 2 0 0 1-2 2H2a2 2 0 0 1-2-2z" /><path fill="#1272c4" d="M5 27v-5a3 3 0 0 1 3-3h14a3 3 0 0 1 3 3v5z" /><path d="M10 23h10" stroke="#0b4f91" strokeWidth="1.500" /></svg> },
  { name: "Mail", icon: <svg viewBox="0 0 30 28" className="h-7 w-[30px]"><path fill="#0f5ea8" d="M0 11 15 0l15 11-15 9z" /><path fill="#fff" d="M3 10h24l-12 9z" /><path fill="#35b8f1" d="M0 11v15a2 2 0 0 0 2 2h26a2 2 0 0 0 2-2V11L15 20z" /><path fill="#1989d8" d="m0 27 15-10 13 11H2z" opacity=".6" /></svg> },
  { name: "Brave", icon: <Brave className="h-[30px] w-[26px]" /> },
  { name: "Assistant", icon: <svg viewBox="0 0 30 30" className="size-[30px]"><rect width="30" height="30" fill="#7f9dc0" /><path d="M9 25v-5c-6-9 2-15 8-13 5 1 7 4 7 8l2 3-2 1v4h-4v2M11 21c-3-6-1-11 4-11s6 5 3 9v4M12 16c0-5 6-5 6-1s-3 3-3 7" fill="none" stroke="#dbe8f5" strokeWidth="1" /></svg> },
  { name: "To Do", icon: <svg viewBox="0 0 30 28" className="h-7 w-[30px]"><path fill="#1c4f9f" d="m0 15 5-5 7 7-5 5z" /><path fill="#3f8ee8" d="m7 22 5-5L24 5l5 5-17 17z" /></svg>, badge: <span className="flex size-5 items-center justify-center rounded-full bg-[#a74bbd] text-[12px] text-white">2</span> },
  { name: "Brave profile", dot: true, icon: <Brave className="h-[30px] w-[26px]" />, badge: <MonoBall /> },
  { name: "Terminal", dot: true, icon: <svg viewBox="0 0 30 24" className="h-6 w-[30px]"><rect width="30" height="24" rx="2" fill="#333" /><path fill="#8b8b8b" d="M0 2a2 2 0 0 1 2-2h26a2 2 0 0 1 2 2v2H0z" /><path d="m5 8 5 5-5 5M13 18h9" stroke="#fff" strokeWidth="2.200" fill="none" /></svg> },
  { name: "Visual Studio Code", dot: true, icon: <svg viewBox="0 0 24 24" className="size-[30px]"><path fill="#1f8ad2" d="M23.150 2.587L18.210.210a1.494 1.494 0 0 0-1.705.290l-9.460 8.630-4.120-3.128a.999.999 0 0 0-1.276.057L.327 7.261A1 1 0 0 0 .326 8.740L3.899 12 .326 15.260a1 1 0 0 0 .001 1.479L1.650 17.940a.999.999 0 0 0 1.276.057l4.120-3.128 9.460 8.630a1.492 1.492 0 0 0 1.704.290l4.942-2.377A1.500 1.500 0 0 0 24 20.060V3.939a1.500 1.500 0 0 0-.850-1.352zm-5.146 14.861L10.826 12l7.178-5.448v10.896z" /><path fill="#33a9f3" d="m18 0 5.200 2.600A1.500 1.500 0 0 1 24 4v16a1.500 1.500 0 0 1-.800 1.400L18 24z" /></svg> },
  { name: "Brave window", active: true, icon: <Brave className="h-[30px] w-[26px]" />, badge: <Globe className="size-[22px]" /> },
];

function Taskbar() {
  return (
    <footer className="flex h-[59px] shrink-0 items-center border-t-2 border-[#b0b0b2] bg-[linear-gradient(90deg,#d1d7e8,#d9dade_12%,#dadada_20%,#dadada_88%,#d2d7e6)] text-[#222]">
      <div className="w-1/6 pl-[24px]">
        <button aria-label="Weather" className="relative block h-11 w-11">
          <svg viewBox="0 0 32 22" aria-hidden="true" className="absolute left-0 top-[13px] h-[22px] w-8"><path fill="#9bc0f0" d="M6 21a6 6 0 0 1 0-12 10 10 0 0 1 18 0 6.100 6.100 0 0 1 2 12z" /><path fill="#c8dcf8" d="M6 17a6 6 0 0 1 0-8 10 10 0 0 1 18 0 6 6 0 0 1 4 8z" /></svg>
          <span className="absolute left-[11px] top-0 flex h-5 items-center rounded-full bg-[#f2f3f7] px-[5px] text-[12px]">26°</span>
        </button>
      </div>
      <div className="flex items-center">
        <button aria-label="Start" className="mr-[18px]">
          <svg viewBox="0 0 29 29" aria-hidden="true" className="size-[29px]"><path fill="#29a9e8" d="M0 1a1 1 0 0 1 1-1h13v14H0z" /><path fill="#1f9ae0" d="M15 0h13a1 1 0 0 1 1 1v13H15zM0 15h14v14H1a1 1 0 0 1-1-1z" /><path fill="#0f7fd0" d="M15 15h14v13a1 1 0 0 1-1 1H15z" /></svg>
        </button>
        <div className="mr-[4px] flex h-[38px] w-[272px] items-center rounded-full border border-[#c4c4c6] bg-[#f3f3f3] pl-[13px] pr-[6px]">
          <Line className="mr-[13px] size-[19px]" box="0 0 19 19" w={2}><circle cx="8" cy="8" r="6.800" /><path d="m13 13 5.500 5.500" /></Line>
          <input aria-label="Search" placeholder="Search" className="min-w-0 flex-1 bg-transparent text-[16px] leading-6 outline-none placeholder:text-[#5c5c5c]" />
          <svg viewBox="0 0 56 34" aria-hidden="true" className="h-[34px] w-14"><path fill="#d9ac7c" d="M1 28c8-6 46-8 54-2-4 8-48 9-54 2z" /><path fill="#3d8b4b" d="m6 15 19-3 5 13-20 4z" /><path fill="#f8f8f4" d="m7 13 9 0 8-3 4 13-8 1-9 2z" /><path d="m16 13 4 11M9 16l6-1M10 19l6-1M19 14l5-2M20 17l5-2" stroke="#b9c4b4" /><path d="m22 15 7-9" stroke="#f2a848" strokeWidth="3.500" /><path d="m28.500 6.500 1.800-2.400" stroke="#e3506b" strokeWidth="3.500" /><path fill="#1c6fe8" d="M36 12c0-11 16-11 16 0v13a3 3 0 0 1-3 3H39a3 3 0 0 1-3-3z" /><path d="M41 5c0-5 6-5 6 0" stroke="#0d4cb4" strokeWidth="1.500" fill="none" /><path fill="#0f56cc" d="M38 17h12v7H38z" /><path fill="#56a8ff" d="M41 9h6v3h-6z" /></svg>
        </div>
        {apps.map((a) => (
          <button key={a.name} aria-label={a.name} className="flex h-[57px] w-[55px] items-center justify-center">
            <span className={`relative flex h-[47px] w-[46px] items-center justify-center rounded-[5px] ${a.active ? "bg-[#efefef] shadow-sm" : ""}`}>
              {a.icon}
              {a.badge && <span className="absolute right-0 top-[2px]">{a.badge}</span>}
              {a.dot && <span className="absolute -bottom-px left-[20px] h-1 w-[7px] rounded-full bg-[#838383]" />}
              {a.active && <span className="absolute -bottom-px left-[13px] h-1 w-5 rounded-full bg-[#a74bbd]" />}
            </span>
          </button>
        ))}
      </div>
      <div className="ml-auto flex items-center pr-[24px]">
        <button aria-label="Hidden icons" className="mr-[23px]"><Line className="size-[14px]" box="0 0 14 14" w={1.6}><path d="m1 10 6-6 6 6" /></Line></button>
        <button aria-label="Network" className="mr-[10px]"><Line><path d="M.500 8a13.500 13.500 0 0 1 19 0M3.500 11a9.300 9.300 0 0 1 13 0M6.500 14a5 5 0 0 1 7 0" /><circle cx="10" cy="16.500" r="1.700" fill="currentColor" stroke="none" /></Line></button>
        <button aria-label="Volume" className="mr-[10px]"><Line w={1.5}><path d="M1 7.500h3.500L9 3.500v13l-4.500-4H1zM12 7.500c1.500 1.500 1.500 3.500 0 5M14.500 5c3 3 3 7 0 10" /><path opacity=".3" d="M17 3c4 4 4 10 0 14" /></Line></button>
        <button aria-label="Battery" className="mr-[20px]"><Line w={1.6}><rect x="1" y="4.500" width="16" height="11" rx="2.500" /><path fill="currentColor" d="M4 7.500h10v5H4zM18.500 8.500v3" /></Line></button>
        <div className="mr-[11px] text-right text-[15px] leading-5 text-[#1c1c1c]"><div>17:57</div><div>26/02/2024</div></div>
        <button aria-label="Notifications" className="mr-[21px] text-[#6a2a86]"><svg viewBox="0 0 18 20" fill="currentColor" aria-hidden="true" className="h-5 w-[18px]"><path d="M9 0a6.500 6.500 0 0 1 6.500 6.500V12l2 3v1H.500v-1l2-3V6.500A6.500 6.500 0 0 1 9 0zM6 17.500h6a3 3 0 0 1-6 0z" /></svg></button>
        <button aria-label="Copilot">
          <svg viewBox="0 0 30 30" aria-hidden="true" className="size-[30px]">
            <defs>
              <linearGradient id="copA" x1="0" y1="0" x2="0" y2="1"><stop offset="0" stopColor="#1565e0" /><stop offset=".5" stopColor="#22b8a8" /><stop offset="1" stopColor="#f2c230" /></linearGradient>
              <linearGradient id="copB" x1="0" y1="0" x2="0" y2="1"><stop offset="0" stopColor="#a24ff0" /><stop offset="1" stopColor="#f26a6a" /></linearGradient>
            </defs>
            <path fill="url(#copA)" d="M8 1h10c3 0 3 3 4 6h-4c-2 0-3 1-4 4l-3 9H4c-3 0-4-2-3-5l3-10c.7-2.500 2-4 4-4z" />
            <path fill="url(#copB)" d="M19 8h6c4 0 5 2 4 5l-2 7H14l3-9c.5-2 1-3 2-3z" />
            <rect x="7" y="20" width="23" height="10" rx="2" fill="#fbc61c" />
            <text x="18.500" y="28" textAnchor="middle" fontSize="8" fontWeight="700" fill="#222">PRE</text>
          </svg>
        </button>
      </div>
    </footer>
  );
}

export default function App() {
  return (
    <div className={`flex h-screen flex-col overflow-hidden bg-white ${SANS}`}>
      <TitleBar />
      <Toolbar />
      <Bookmarks />
      <div className="flex min-h-0 flex-1">
        <Rail />
        <main className="min-w-0 flex-1 overflow-hidden">
          <RepoHeader />
          <div className="pl-[80px] pr-[81px] pt-[29px]">
            <PullHeader />
            <div className="mt-[18px] flex">
              <Timeline />
              <Sidebar />
            </div>
          </div>
        </main>
        <Scrollbar />
      </div>
      <Taskbar />
    </div>
  );
}
